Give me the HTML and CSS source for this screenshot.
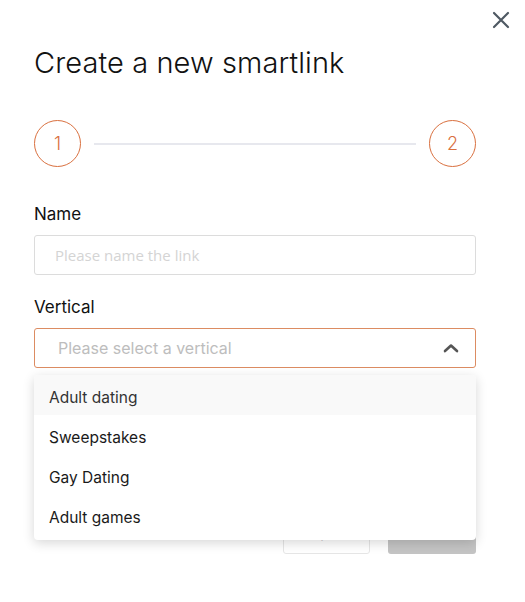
FILE: index.html
```html
<!DOCTYPE html>
<html lang="en">
<head>
    <meta charset="UTF-8">
    <meta name="viewport" content="width=device-width, initial-scale=1.0">
    <title>Create a new smartlink</title>
    <link rel="stylesheet" href="styles.css">
</head>
<body>
    <div class="modal">
        <button class="close-btn" aria-label="Close">
            <svg width="18" height="18" viewBox="0 0 18 18">
                <path d="M2 2 L16 16 M16 2 L2 16" stroke="#4f5963" stroke-width="2.2" stroke-linecap="round"/>
            </svg>
        </button>

        <h1>Create a new smartlink</h1>

        <div class="stepper">
            <div class="step">1</div>
            <div class="step-line"></div>
            <div class="step">2</div>
        </div>

        <div class="field">
            <label class="field-label">Name</label>
            <input class="text-input" type="text" placeholder="Please name the link">
        </div>

        <div class="field">
            <label class="field-label">Vertical</label>
            <div class="select-wrap">
                <div class="select open">
                    <span class="select-placeholder">Please select a vertical</span>
                    <svg class="chevron" width="16" height="10" viewBox="0 0 16 10">
                        <path d="M2 8 L8 2.5 L14 8" fill="none" stroke="#555" stroke-width="2.6" stroke-linecap="round" stroke-linejoin="round"/>
                    </svg>
                </div>
                <ul class="dropdown">
                    <li class="option active">Adult dating</li>
                    <li class="option">Sweepstakes</li>
                    <li class="option">Gay Dating</li>
                    <li class="option">Adult games</li>
                </ul>
            </div>
        </div>

        <div class="actions">
            <button class="btn btn-outline">Back</button>
            <button class="btn btn-disabled">Next</button>
        </div>
    </div>
</body>
</html>
```

FILE: styles.css
```css
* {
    margin: 0;
    padding: 0;
    box-sizing: border-box;
    font-family: 'Inter', 'Noto Sans', sans-serif;
}

body {
    background-color: #fff;
    color: #111;
}

.modal {
    position: relative;
    width: 525px;
    padding: 45px 49px 0 34px;
}

.close-btn {
    position: absolute;
    top: 11px;
    right: 15px;
    width: 18px;
    height: 18px;
    border: none;
    background: none;
    cursor: pointer;
}

.close-btn svg {
    display: block;
}

h1 {
    font-size: 29px;
    font-weight: 300;
    line-height: 36px;
    color: #111;
    letter-spacing: 0.1px;
}

.stepper {
    display: flex;
    align-items: center;
    margin-top: 39px;
}

.step {
    width: 47px;
    height: 47px;
    border: 1px solid #d9703f;
    border-radius: 50%;
    display: flex;
    align-items: center;
    justify-content: center;
    color: #d9703f;
    font-size: 18px;
    font-weight: 300;
    flex-shrink: 0;
}

.step-line {
    flex: 1;
    height: 2px;
    background-color: #e7e8ee;
    margin: 0 13px;
}

.field {
    margin-top: 21px;
}

.stepper + .field {
    margin-top: 36px;
}

.field-label {
    display: block;
    font-size: 17px;
    line-height: 22px;
    color: #111;
    margin-bottom: 10px;
}

.text-input {
    width: 100%;
    height: 40px;
    border: 1px solid #dcdcdc;
    border-radius: 3px;
    padding: 0 20px;
    font-family: 'Open Sans', sans-serif;
    font-size: 15px;
    outline: none;
}

.text-input::placeholder {
    color: #d4d4d4;
}

.select-wrap {
    position: relative;
}

.select {
    height: 40px;
    border: 1px solid #dc8c62;
    border-radius: 3px;
    display: flex;
    align-items: center;
    justify-content: space-between;
    padding: 0 16px 0 23px;
}

.select-placeholder {
    font-size: 16px;
    color: #bdbdbd;
}

.chevron {
    display: block;
}

.dropdown {
    position: absolute;
    top: 47px;
    left: 0;
    right: 0;
    list-style: none;
    background-color: #fff;
    border-radius: 4px;
    box-shadow: 0 3px 12px rgba(0, 0, 0, 0.16);
    padding-bottom: 5px;
    z-index: 10;
}

.option {
    height: 40px;
    display: flex;
    align-items: center;
    padding: 5px 15px 0;
    font-size: 15.5px;
    color: #1a1a1a;
}

.option.active {
    background-color: #f9f9f9;
    color: #333;
    border-radius: 4px 4px 0 0;
}

.actions {
    display: flex;
    justify-content: flex-end;
    gap: 18px;
    margin-top: 146px;
}

.btn {
    width: 87px;
    height: 40px;
    border-radius: 3px;
    font-size: 15px;
    border: none;
}

.btn-outline {
    background-color: #fff;
    border: 1px solid #e6e6e6;
    color: #333;
}

.btn-disabled {
    width: 88px;
    background-color: #c4c4c4;
    color: #fff;
}
```
